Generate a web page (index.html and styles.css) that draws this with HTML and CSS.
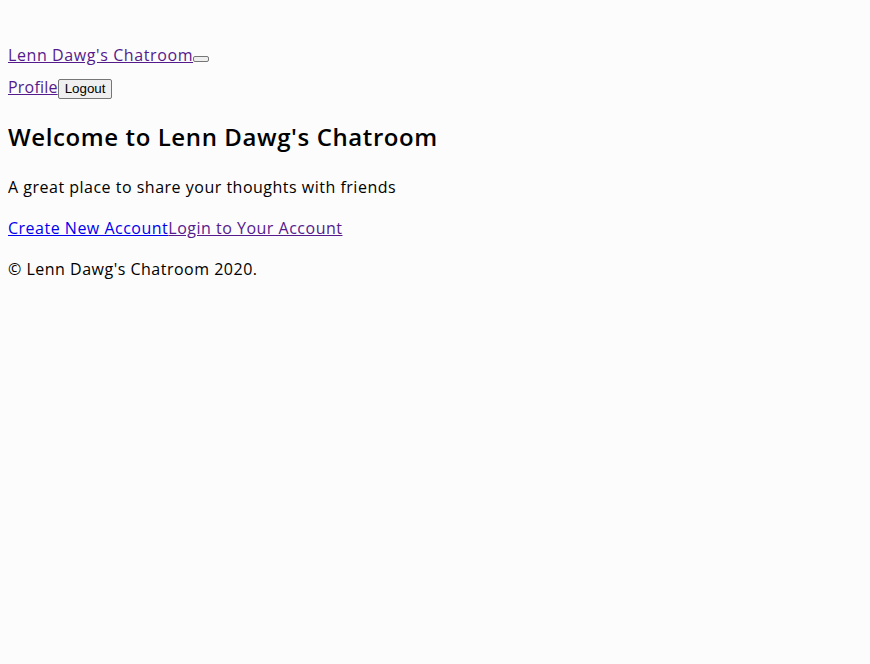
FILE: index.html
```html
<!DOCTYPE html>
<html>
<head>
<meta charset="utf-8">
<link rel="stylesheet" href="styles.css">
</head>
<body>
<nav class="nav">
  <div class="brand-row"><a class="visited brand" href="#">Lenn Dawg's Chatroom</a><button class="toggler"></button></div>
  <div class="user-row"><a class="visited profile" href="#">Profile</a><button class="logout">Logout</button></div>
</nav>
<main>
  <h2 class="title">Welcome to Lenn Dawg's Chatroom</h2>
  <p class="lead">A great place to share your thoughts with friends</p>
  <p class="links"><a class="fresh" href="#">Create New Account</a><a class="visited" href="#">Login to Your Account</a></p>
</main>
<footer class="footer"><p>© Lenn Dawg's Chatroom 2020.</p></footer>
</body>
</html>
```
FILE: styles.css
```css
html { background: #fcfcfc; }
body {
  margin: 8px;
  font-family: "Open Sans", sans-serif;
  font-size: 16px;
  line-height: 24px;
  letter-spacing: 0.5px;
  color: #000;
}
.nav { padding-top: 35px; }
.brand-row { height: 24px; }
.user-row { margin-top: 8px; height: 24px; }
a.visited { color: #551a8b; }
a.fresh { color: #0000ee; }
.brand { letter-spacing: 0.6px; }
.profile { letter-spacing: 0.2px; }
.toggler {
  width: 16px;
  height: 6px;
  padding: 0;
  vertical-align: baseline;
  border: 1px solid #767676;
  border-radius: 2px;
  background: #efefef;
}
.logout {
  font-family: "Liberation Sans", Arial, sans-serif;
  font-size: 13.33px;
  letter-spacing: 0;
  height: 20px;
  padding: 1px 6px;
  border: 1px solid #767676;
  border-radius: 2px;
  background: #efefef;
  color: #000;
  vertical-align: baseline;
}
.title {
  font-size: 24px;
  line-height: 36px;
  font-weight: 600;
  letter-spacing: 0.6px;
  margin: 20px 0;
}
p { margin: 16px 0; }
.lead { margin-bottom: 17px; }
.links { margin-bottom: 17px; }
```
